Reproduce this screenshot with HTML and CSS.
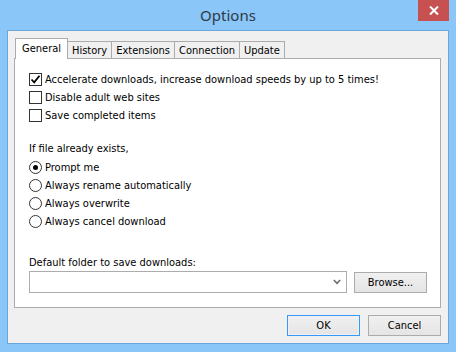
FILE: index.html
```html
<!DOCTYPE html>
<html>
<head>
    <link rel="stylesheet" href="styles.css">
</head>
<body>
    <div class="window">
        <div class="titlebar">
            <div class="title">Options</div>
            <div class="close">
                <svg width="10" height="9" viewBox="0 0 10 9">
                    <path d="M1 0.5 L9 8.5 M9 0.5 L1 8.5" stroke="#fff" stroke-width="2" fill="none"/>
                </svg>
            </div>
        </div>

        <div class="client">
            <div class="tabs">
                <div class="tab active">General</div>
                <div class="tab">History</div>
                <div class="tab">Extensions</div>
                <div class="tab">Connection</div>
                <div class="tab">Update</div>
            </div>

            <div class="panel">
                <div class="check-list">
                    <label class="row">
                        <span class="box">
                            <svg width="11" height="11" viewBox="0 0 11 11">
                                <path d="M1.5 5.5 L4.2 8.3 L9.5 1.8" stroke="#000" stroke-width="1.8" fill="none"/>
                            </svg>
                        </span>
                        Accelerate downloads, increase download speeds by up to 5 times!
                    </label>
                    <label class="row"><span class="box"></span>Disable adult web sites</label>
                    <label class="row"><span class="box"></span>Save completed items</label>
                </div>

                <div class="group-title">If file already exists,</div>
                <div class="radio-list">
                    <label class="row"><span class="radio checked"></span>Prompt me</label>
                    <label class="row"><span class="radio"></span>Always rename automatically</label>
                    <label class="row"><span class="radio"></span>Always overwrite</label>
                    <label class="row"><span class="radio"></span>Always cancel download</label>
                </div>

                <div class="folder">
                    <div class="folder-label">Default folder to save downloads:</div>
                    <div class="folder-row">
                        <div class="combo">
                            <svg width="8" height="6" viewBox="0 0 8 6">
                                <path d="M0.8 1 L4 4.4 L7.2 1" stroke="#6d6d6d" stroke-width="1.6" fill="none"/>
                            </svg>
                        </div>
                        <button class="btn">Browse...</button>
                    </div>
                </div>
            </div>

            <div class="actions">
                <button class="btn default">OK</button>
                <button class="btn">Cancel</button>
            </div>
        </div>
    </div>
</body>
</html>
```

FILE: styles.css
```css
/* General Styles */
body {
    margin: 0;
    background: #8ac6f7;
    font-family: 'DejaVu Sans Condensed', 'Liberation Sans', sans-serif;
    font-size: 11px;
    color: #000;
}

.window {
    height: 352px;
    display: flex;
    flex-direction: column;
}

/* Title bar */
.titlebar {
    height: 30px;
    display: grid;
    grid-template-columns: 1fr auto 1fr;
    align-items: start;
}

.title {
    grid-column: 2;
    font-family: 'Noto Sans', sans-serif;
    font-size: 15px;
    line-height: 30px;
    color: #2d3a46;
}

.close {
    grid-column: 3;
    justify-self: end;
    width: 31px;
    height: 21px;
    margin-right: 7px;
    background: #c75050;
    display: flex;
    justify-content: center;
    align-items: center;
}

/* Client area */
.client {
    flex: 1;
    margin: 0 7px 8px 7px;
    border: 1px solid #6aa6dc;
    background: #f0f0f0;
    padding: 7px 7px 7px 6px;
    display: flex;
    flex-direction: column;
}

/* Tabs */
.tabs {
    display: flex;
    align-items: flex-end;
    padding-left: 1px;
    margin-bottom: -1px;
    position: relative;
    z-index: 1;
}

.tab {
    height: 16px;
    line-height: 17px;
    padding: 0 4px;
    border: 1px solid #acacac;
    margin-left: -1px;
    background: #f0f0f0;
}

.tab:first-child {
    margin-left: 0;
}

.tab.active {
    height: 20px;
    line-height: 19px;
    padding: 0 6px;
    border-bottom: none;
    background: #fff;
}

/* Panel */
.panel {
    flex: 1;
    background: #fff;
    border: 1px solid #acacac;
    padding: 11px 13px 14px 14px;
    display: flex;
    flex-direction: column;
}

.row {
    height: 18px;
    display: flex;
    align-items: center;
    gap: 3px;
}

.box {
    width: 11px;
    height: 11px;
    border: 1px solid #333;
    background: #fff;
    display: flex;
}

.radio {
    width: 11px;
    height: 11px;
    border: 1px solid #333;
    border-radius: 50%;
    background: #fff;
    display: flex;
    justify-content: center;
    align-items: center;
}

.radio.checked::after {
    content: "";
    width: 5px;
    height: 5px;
    border-radius: 50%;
    background: #000;
}

.group-title {
    margin-top: 16px;
    line-height: 18px;
}

/* Folder chooser */
.folder {
    margin-top: auto;
}

.folder-label {
    line-height: 16px;
}

.folder-row {
    display: flex;
    align-items: center;
    gap: 7px;
}

.combo {
    flex: 1;
    height: 20px;
    border: 1px solid #acacac;
    background: #fff;
    display: flex;
    justify-content: flex-end;
    align-items: center;
    padding-right: 5px;
}

/* Buttons */
.btn {
    width: 73px;
    height: 21px;
    padding: 0;
    border: 1px solid #acacac;
    background: linear-gradient(#f0f0f0, #e5e5e5);
    font-family: inherit;
    font-size: 11px;
    color: #000;
}

.btn.default {
    border-color: #3c7fb1;
    box-shadow: inset 0 0 0 1px #f0f0f0;
    border: 1px solid #3399ff;
}

.actions {
    display: flex;
    justify-content: flex-end;
    gap: 8px;
    margin-top: 7px;
}
```
